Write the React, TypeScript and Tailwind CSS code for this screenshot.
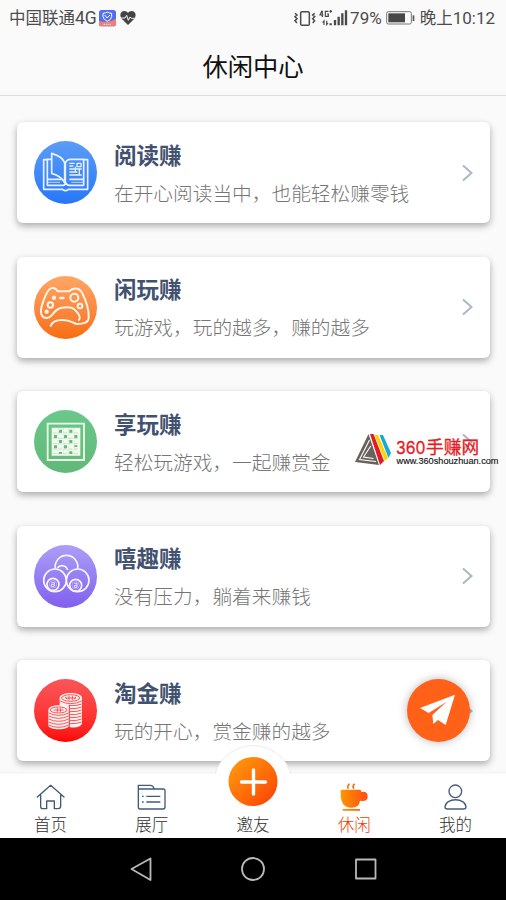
import React from 'react';

const BookIcon = () => (
  <svg viewBox="102 93 189 189" className="block size-full" fill="none" stroke="#eaf2ff" strokeWidth="5" strokeLinejoin="round">
    <path d="M143 149H131V238H188Q196 246 205 238H263V149H250" />
    <path d="M154 148H142V226H185Q194 228 197 218Q201 227 210 226H251V148H212Q199 148 196 160V218" />
    <path d="M155 130Q188 140 194 158V218Q184 198 155 190Z" />
    <path d="M142 208H185M208 208H251" strokeWidth="5" />
    <path d="M142 217H180M214 217H251" strokeWidth="4" opacity=".6" />
    <path d="M208 160H224M208 168H220M208 177H245M208 186H232M208 195H245M231 160H243V170H231ZM226 170V186M238 177V195" strokeWidth="3.8" />
  </svg>
);

const GamepadIcon = () => (
  <svg viewBox="42 32 189 189" className="block size-full" fill="none" stroke="#fff5ea" strokeWidth="6" strokeLinecap="round" strokeLinejoin="round">
    <path d="M92 182C97 168 111 164 125 164C154 163 157 174 171 176C190 176 207 172 206 155C207 136 199 108 187 84C178 66 160 66 147 78H113C107 68 96 64 88 72C78 82 61 126 63 141C65 159 83 163 94 151C103 141 108 130 125 127C142 124 157 124 165 134C177 145 184 154 177 164" />
    <circle cx="163" cy="97" r="12" />
    <circle cx="91" cy="119" r="8" />
    <circle cx="180" cy="122" r="7" />
    <path d="M121 98H130" strokeWidth="8" />
    <g fill="#fff5ea" stroke="none"><circle cx="102" cy="97" r="6.5" /><circle cx="80" cy="139" r="6.5" /></g>
  </svg>
);

const GridIcon = () => (
  <svg viewBox="42 45 189 189" className="block size-full">
    <path d="M83 86H192V195H83Z" fill="none" stroke="#eefbe9" strokeWidth="5.5" />
    <path d="M95 98H181V182H95Z" fill="#f3fbef" />
    <g stroke="#73bd83" strokeWidth="1.8" fill="none" opacity=".6">
      <path d="M98 114H178M98 130H178M98 146H178M98 162H178M98 176H178" strokeDasharray="12 4" />
      <path d="M114 100V180M130 100V180M146 100V180M162 100V180" strokeDasharray="4 5" />
    </g>
    <path d="M117 104h9v9h-9zM148 104h9v9h-9zM102 120h9v9h-9zM132 120h9v9h-9zM163 120h9v9h-9zM117 135h9v9h-9zM148 135h9v9h-9zM102 151h9v9h-9zM132 151h9v9h-9zM163 151h9v5h-9zM117 171h9v5h-9zM148 169h9v8h-9z" fill="#68b77b" />
  </svg>
);

const BallsIcon = () => (
  <svg viewBox="42 45 189 189" className="block size-full" fill="none" stroke="#f7f3ff" strokeWidth="5">
    <path d="M106 116A34 34 0 1 1 173 116" />
    <path d="M112 114Q118 106 127 107Q139 108 143 120" />
    <circle cx="105" cy="151" r="34" />
    <circle cx="173" cy="151" r="34" />
    <circle cx="99" cy="163" r="18" />
    <circle cx="167" cy="166" r="18" />
    <g strokeWidth="2.6">
      <circle cx="99" cy="163" r="11" opacity=".5" />
      <circle cx="167" cy="166" r="11" opacity=".5" />
      <path d="M94 158H103V169H94V163H103M163 160H171V172H163V166H171" />
    </g>
  </svg>
);

const CoinsIcon = () => (
  <svg viewBox="42 42 189 189" className="block size-full">
    <path d="M119 99C119 79 186 79 186 99V174C186 189 147 192 147 182H119Z" fill="#fff0ed" />
    <path d="M85 135C85 116 147 116 147 135V181C147 197 85 197 85 181Z" fill="#fff0ed" />
    <g fill="none" stroke="#f32e34" strokeWidth="2.4">
      <ellipse cx="152" cy="99" rx="27" ry="10" />
      <ellipse cx="116" cy="135" rx="25" ry="9" />
      <path d="M120 108Q152 124 185 108M148 122Q171 123 185 117M150 131Q171 132 185 126M150 140Q171 141 185 135M150 149Q171 150 185 144M150 158Q171 159 185 153M150 167Q171 168 185 162M150 176Q171 177 185 171" />
      <path d="M86 144Q116 158 146 144M86 153Q116 167 146 153M86 162Q116 176 146 162M86 171Q116 185 146 171M86 180Q116 194 146 180" />
      <path d="M148 119V184" strokeWidth="3" />
      <path d="M136 99H168M147 92V106M157 92V106M136 95L141 103M168 95L163 103M101 135H131M112 128V142M121 128V142" />
    </g>
  </svg>
);

const CARDS = [
  { title: '阅读赚', desc: '在开心阅读当中，也能轻松赚零钱', bg: 'from-[#5b9df5] to-[#2577f8]', icon: <BookIcon /> },
  { title: '闲玩赚', desc: '玩游戏，玩的越多，赚的越多', bg: 'from-[#ffa664] to-[#f76d09]', icon: <GamepadIcon /> },
  { title: '享玩赚', desc: '轻松玩游戏，一起赚赏金', bg: 'from-[#6bc78b] to-[#61b978]', icon: <GridIcon /> },
  { title: '嘻趣赚', desc: '没有压力，躺着来赚钱', bg: 'from-[#ad9df7] to-[#805fee]', icon: <BallsIcon /> },
  { title: '淘金赚', desc: '玩的开心，赏金赚的越多', bg: 'from-[#fb5558] to-[#fb0000]', icon: <CoinsIcon /> },
];

function StatusBar() {
  return (
    <div className="flex h-9 items-center justify-between pr-[11px] pl-[9px] text-[16.5px] leading-none text-[#4c4c4c]">
      <div className="flex items-center">
        <span className="whitespace-nowrap">中国联通<span className="font-['Roboto'] text-[17.5px]">4G</span></span>
        <svg className="ml-[2px]" width="17" height="17" viewBox="0 0 51 51">
          <defs><clipPath id="badge"><rect width="51" height="49" rx="8" /></clipPath></defs>
          <g clipPath="url(#badge)"><path d="M0 0H51V51H0Z" fill="#526ff2" /><path d="M0 32Q25 43 51 26V51H0Z" fill="#f57b75" /></g>
          <path d="M25 6Q31 10 38 10V20Q37 29 25 34Q13 29 12 20V10Q19 10 25 6ZM17 15L24 24L33 15" fill="none" stroke="#fff" strokeWidth="3" />
          <path d="M14 43H37" stroke="#ffd3cf" strokeWidth="4" strokeDasharray="4 2" />
        </svg>
        <svg className="ml-[4.5px]" width="16" height="16" viewBox="0 0 48 48">
          <path d="M24 45L5 26C-3 15 2 3 13 3Q20 3 24 8Q28 3 35 3C46 3 51 15 43 26Z" fill="#444" />
          <path d="M4 24H15L20 16L25 31L30 21L34 25H44" stroke="#fafafa" strokeWidth="3" fill="none" />
        </svg>
      </div>
      <div className="flex items-center">
        <svg width="54" height="18" viewBox="126 24 162 54" fill="none" stroke="#4a4a4a">
          <rect x="146" y="32" width="26" height="41" rx="4" strokeWidth="4.5" />
          <path d="M129 37L135 42L129 47L135 53L129 59L135 66M188 37L182 42L188 47L182 53L188 59L182 66" strokeWidth="4.5" />
          <path d="M210 29L204 42H214M211 29V48M229 31H220V46H229V39H225M232 31H240M236 27V35" strokeWidth="3.5" />
          <path d="M216 72V60L212 65M224 59V71L228 66" strokeWidth="3.5" />
          <path d="M236 67V73M249 57V73M260 47V73M271 37V73M282 28V73" strokeWidth="7" />
        </svg>
        <span className="ml-[2px] font-['Roboto'] text-[17px]">79%</span>
        <svg className="ml-[4px]" width="29" height="14" viewBox="0 0 87 42">
          <rect x="2" y="2" width="74" height="37" rx="5" fill="none" stroke="#777" strokeWidth="3" />
          <path d="M7 7H57V34H7Z" fill="#484848" /><path d="M80 13H85V30H80Z" fill="#555" />
        </svg>
        <span className="ml-[5px] whitespace-nowrap">晚上<span className="font-['Roboto'] text-[17px]">10:12</span></span>
      </div>
    </div>
  );
}

function SiteMark() {
  return (
    <svg className="absolute top-[430px] left-[352px]" width="150" height="40" viewBox="352 430 150 40">
      <path d="M368.5 434L355 462L379 465Z" fill="#6b625c" />
      <path d="M369.5 440L359.5 459.5L376 461.5M370.8 446L363.5 457L373.5 458.5" stroke="#fff" strokeWidth="1.1" fill="none" />
      <path d="M370 435.5L379.5 464" stroke="#fff" strokeWidth="1" />
      <path d="M370 434H373.5L384 461L380 465Z" fill="#e01c24" />
      <path d="M374.5 435H378L388 458L385 461Z" fill="#ffd400" />
      <path d="M379.5 435H383L391 453L388.5 458Z" fill="#15a9dc" />
      <g className="font-['Inter','Noto_Sans_CJK_SC',sans-serif]" fill="#e5201f" stroke="#e5201f" strokeWidth=".3">
        <text x="396" y="453.5" fontSize="17.5" textLength="29.5" lengthAdjust="spacingAndGlyphs">360</text>
        <text x="426" y="453.5" fontSize="17.7">手赚网</text>
      </g>
      <text x="396.5" y="464.3" fill="#151515" stroke="#151515" strokeWidth=".15" fontSize="9" textLength="102" lengthAdjust="spacingAndGlyphs" className="font-['Liberation_Sans',sans-serif]">www.360shouzhuan.com</text>
    </svg>
  );
}

function TabItem({ label, active, children }: { label: string; active?: boolean; children?: React.ReactNode }) {
  return (
    <div className={`flex flex-1 flex-col items-center pt-[9px] ${active ? 'text-[#f03c00]' : 'text-[#303030]'}`}>
      <div className="h-7">{children}</div>
      <span className="mt-[4px] text-[16.5px] leading-[18px] font-light">{label}</span>
    </div>
  );
}

function TabBar() {
  return (
    <div className="relative h-16 shrink-0">
      <div className="absolute -top-[29px] left-1/2 size-[80px] -translate-x-1/2 rounded-full border border-[#ececec] bg-white" />
      <div className="relative flex h-full bg-white">
        <TabItem label="首页">
          <svg width="29" height="28" viewBox="108 130 87 84" fill="none" stroke="#455875" strokeWidth="4" strokeLinejoin="round" strokeLinecap="round">
            <path d="M112 172L152 137L192 172M122 165V201Q122 207 129 207H140V184H163V207H174Q182 207 182 200V165" />
          </svg>
        </TabItem>
        <TabItem label="展厅">
          <svg width="29" height="28" viewBox="412 130 87 84" fill="none" stroke="#43597d" strokeWidth="4" strokeLinejoin="round">
            <path d="M416 148V137H453Q460 137 464 148M416 148H491Q496 148 496 154V202Q496 208 490 208H421Q416 208 416 202ZM440 170H482M440 187H482M427 170H432M427 187H432" />
          </svg>
        </TabItem>
        <TabItem label="邀友" />
        <TabItem label="休闲" active>
          <svg width="29" height="28" viewBox="262 130 87 84">
            <defs><linearGradient id="cup"><stop stopColor="#ff9600" /><stop offset="1" stopColor="#ff4d12" /></linearGradient></defs>
            <path d="M268 150H322Q326 150 326 157Q345 154 345 171Q345 187 322 183Q320 204 296 204Q273 204 267 184Q263 172 264 155Q264 150 268 150ZM270 208H322V213H270Z" fill="url(#cup)" />
            <path d="M287 147Q283 142 287 137L290 132M304 147Q299 142 303 136L306 132" stroke="#f66c11" strokeWidth="5" fill="none" />
          </svg>
        </TabItem>
        <TabItem label="我的">
          <svg width="29" height="28" viewBox="565 130 87 84" fill="none" stroke="#485c79" strokeWidth="4">
            <circle cx="608" cy="155" r="19" /><path d="M584 208Q577 208 577 202C578 173 639 173 640 202Q640 208 632 208Z" />
          </svg>
        </TabItem>
      </div>
      <div className="absolute -top-[17px] left-1/2 flex size-[49px] -translate-x-1/2 items-center justify-center rounded-full bg-linear-to-br from-[#ff9e0d] to-[#fb3306]">
        <svg width="28" height="28" viewBox="0 0 28 28"><path d="M2 14H26M14 2V26" stroke="#fff" strokeWidth="3.4" strokeLinecap="round" /></svg>
      </div>
    </div>
  );
}

export default function App() {
  return (
    <div className="relative flex h-[900px] w-[506px] flex-col overflow-hidden bg-[#fafafa] font-['Noto_Sans_CJK_SC',sans-serif]">
      <StatusBar />
      <header className="flex h-[60px] shrink-0 items-center justify-center border-b border-[#dedede] text-[25.3px] leading-none text-[#111]">休闲中心</header>
      <main className="flex h-[678px] shrink-0 flex-col gap-[33.5px] overflow-hidden border-b-[3px] border-[#f7f7f7] pt-[26px] pr-4 pl-[17px]">
        {CARDS.map((card) => (
          <section key={card.title} className="flex h-[101px] shrink-0 items-center rounded-md bg-white pr-[17px] pl-[17px] shadow-[0_3px_7px_rgba(0,0,0,0.32)]">
            <div className={`size-[63px] shrink-0 overflow-hidden rounded-full bg-linear-to-b ${card.bg}`}>{card.icon}</div>
            <div className="ml-[17px] flex-1 whitespace-nowrap">
              <h2 className="text-[22.5px] leading-[30px] font-bold text-[#41516f]">{card.title}</h2>
              <p className="mt-[9px] -mb-px text-[19.7px] leading-[30px] font-light text-[#757575]">{card.desc}</p>
            </div>
            <svg width="12" height="18" viewBox="0 0 12 18" fill="none" stroke="#adb7c2" strokeWidth="2"><path d="M2 1.5L10.5 9L2 16.5" /></svg>
          </section>
        ))}
      </main>
      <TabBar />
      <div className="flex h-[62px] shrink-0 items-center justify-center bg-black">
        <svg width="250" height="28" viewBox="0 0 250 28" fill="none" stroke="#b9b9b9" strokeWidth="1.8" strokeLinejoin="round">
          <path d="M22.5 3.5V25L3.5 14Z" />
          <circle cx="125" cy="14" r="11" />
          <rect x="228" y="4.5" width="19.5" height="19" />
        </svg>
      </div>
      <SiteMark />
      <button className="absolute top-[679px] left-[406.5px] flex size-[63px] items-center justify-center rounded-full bg-[#ff6119] shadow-[0_0_10px_rgba(0,0,0,0.28)]">
        <svg width="63" height="63" viewBox="201 87 189 189" fill="#fff"><path d="M240 174L345 134L317 225L294 210L280 222L277 195L320 155L266 189Z" /></svg>
      </button>
    </div>
  );
}
